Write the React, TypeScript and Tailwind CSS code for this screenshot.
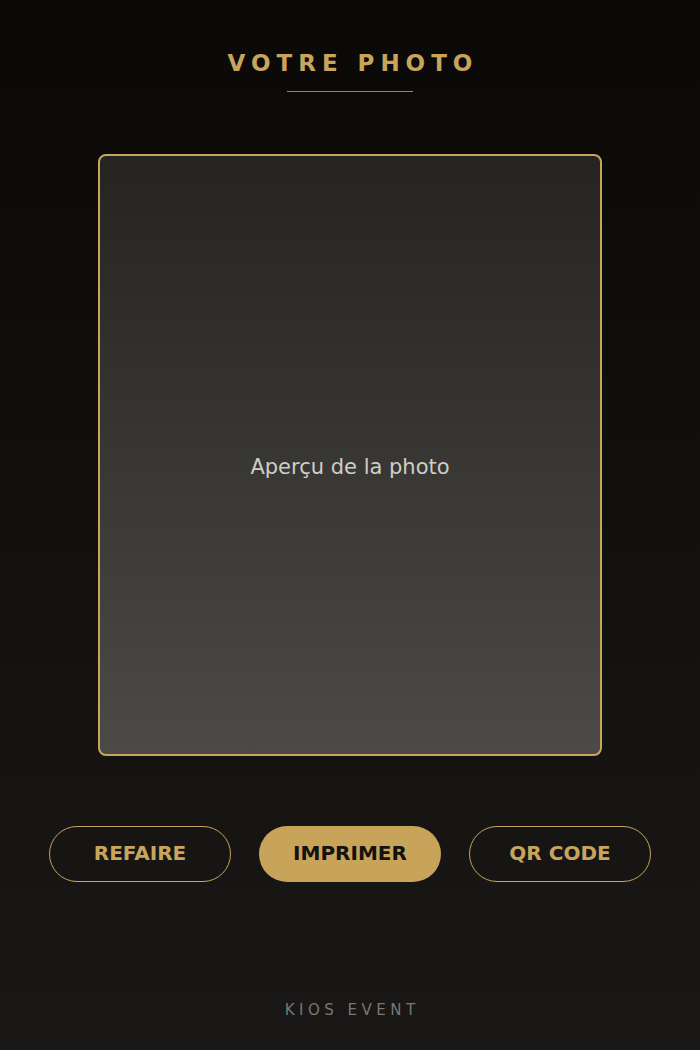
export default function App() {
  return (
    <div
      className="w-[700px] h-[1050px] flex flex-col items-center bg-gradient-to-b from-[#0a0908] to-[#191817]"
      style={{ fontFamily: '"DejaVu Sans", sans-serif' }}
    >
      <h1 className="mt-[49px] text-[23px] leading-[28px] font-bold tracking-[0.26em] pl-[0.26em] text-[#c9a45c]">
        VOTRE PHOTO
      </h1>
      <div className="mt-[14px] w-[126px] h-px bg-[#a08455]" />
      <div className="mt-[62px] w-[504px] h-[602px] rounded-[8px] border-2 border-[#c9a45c] bg-gradient-to-b from-[#252422] to-[#4b4a47] flex items-center justify-center">
        <span className="mt-[24px] text-[21px] leading-[24px] text-[#d0cdc6]">Aperçu de la photo</span>
      </div>
      <div className="mt-[70px] flex gap-[28px]">
        <button className="w-[182px] h-[56px] rounded-full border border-[#c9a45c] text-[#c9a45c] text-[20px] leading-[24px] font-bold pb-[2px]">
          REFAIRE
        </button>
        <button className="w-[182px] h-[56px] rounded-full bg-[#c8a35a] text-[#141210] text-[20px] leading-[24px] font-bold pb-[2px]">
          IMPRIMER
        </button>
        <button className="w-[182px] h-[56px] rounded-full border border-[#c9a45c] text-[#c9a45c] text-[20px] leading-[24px] font-bold pb-[2px]">
          QR CODE
        </button>
      </div>
      <div className="mt-auto mb-[29px] text-[15px] tracking-[0.3em] pl-[0.3em] text-[#7a7773]">
        KIOS EVENT
      </div>
    </div>
  );
}
